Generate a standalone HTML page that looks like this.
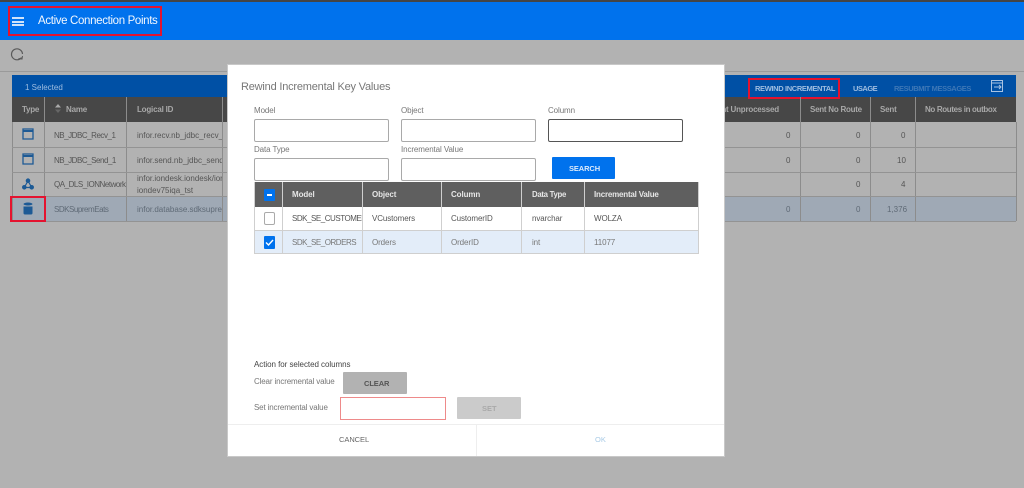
<!DOCTYPE html>
<html><head><meta charset="utf-8"><style>
*{box-sizing:border-box}
html,body{margin:0;padding:0}
body{width:1024px;height:488px;overflow:hidden;background:#b2b2b2;position:relative;font-family:"Liberation Sans",sans-serif;font-size:8px;color:#555}
.a{position:absolute}
.t{position:absolute;white-space:nowrap;line-height:12px}
.b{font-weight:bold}
.r{position:absolute;border:2px solid #e4132f}
.v{position:absolute;width:1px;background:#8c8c8c}
.h{position:absolute;height:1px;background:#939393;left:12px;width:1004px}
.inp{position:absolute;height:23px;background:#fff;border:1px solid #a9a9a9;border-radius:2px}
.dv{position:absolute;width:1px;background:#cfcfcf}
.dh{position:absolute;height:1px;background:#cfcfcf;left:254px;width:445px}
.n{font-size:8px;letter-spacing:-.47px}
.l{color:#777;letter-spacing:-.1px}
</style></head><body>
<div class="a" style="left:0;top:0;width:1024px;height:2px;background:#444"></div>
<div class="a" style="left:0;top:2px;width:1024px;height:38px;background:#0072ed"></div>
<div class="a" style="left:12px;top:17px;width:12px;height:2px;background:#cfe3fa"></div>
<div class="a" style="left:12px;top:20.5px;width:12px;height:2px;background:#cfe3fa"></div>
<div class="a" style="left:12px;top:24px;width:12px;height:2px;background:#cfe3fa"></div>
<div class="t" style="left:38px;top:14px;font-size:11.5px;color:#f2f7fe;line-height:14px;letter-spacing:-.35px">Active Connection Points</div>
<div class="r" style="left:8px;top:6px;width:154px;height:30px"></div>
<svg class="a" style="left:10px;top:47px" width="14" height="14" viewBox="0 0 14 14" fill="none" stroke="#5a5a5a" stroke-width="1.2"><path d="M11.500 10.500A5.500 5.500 0 1 1 12.500 7"/><path d="M8.500 11.500l3.500.5.500-3" stroke-width="1"/></svg>
<div class="a" style="left:0;top:71px;width:1024px;height:1px;background:#9a9a9a"></div>

<div class="a" style="left:12px;top:75px;width:1004px;height:22px;background:#0050a5"></div>
<div class="a" style="left:12px;top:97px;width:1004px;height:25px;background:#474747"></div>
<div class="a" style="left:12px;top:196px;width:1004px;height:25px;background:#9fa9b5"></div>
<div class="t" style="left:25px;top:82px;color:#9ebde0">1 Selected</div>
<div class="t b" style="left:755px;top:83px;color:#9ebde0;font-size:7.5px;letter-spacing:-.36px">REWIND INCREMENTAL</div>
<div class="t b" style="left:853px;top:83px;color:#9ebde0;font-size:7.5px;letter-spacing:-.5px">USAGE</div>
<div class="t b" style="left:894px;top:83px;color:#3d77b6;font-size:7.5px;letter-spacing:-.4px">RESUBMIT MESSAGES</div>
<svg class="a" style="left:990px;top:79px" width="14" height="14" viewBox="0 0 14 14" fill="none" stroke="#a9c3e2"><path d="M1.500 1.500h11v11h-11zM1.500 4h11M4 8h7M9 6l2 2-2 2"/></svg>
<div class="r" style="left:748px;top:78px;width:92px;height:21px"></div>

<div class="t b" style="left:22px;top:104px;color:#a8a8a8;letter-spacing:-.25px">Type</div>
<svg class="a" style="left:54px;top:103px" width="8" height="11"><path d="M4 1l3 3.500H1z" fill="#aaa"/><path d="M4 10l3-3.500H1z" fill="#666"/></svg>
<div class="t b" style="left:66px;top:104px;color:#a8a8a8;letter-spacing:-.2px">Name</div>
<div class="t b" style="left:137px;top:104px;color:#a8a8a8;letter-spacing:-.2px">Logical ID</div>
<div class="t b" style="left:700px;top:104px;color:#a8a8a8;letter-spacing:-.2px;width:79px;overflow:hidden;direction:rtl">Sent Unprocessed</div>
<div class="t b" style="left:810px;top:104px;color:#a8a8a8;letter-spacing:-.25px">Sent No Route</div>
<div class="t b" style="left:880px;top:104px;color:#a8a8a8;letter-spacing:-.2px">Sent</div>
<div class="t b" style="left:925px;top:104px;color:#a8a8a8;letter-spacing:-.35px">No Routes in outbox</div>

<div class="v" style="left:44px;top:97px;height:124px"></div>
<div class="v" style="left:126px;top:97px;height:124px"></div>
<div class="v" style="left:222px;top:97px;height:124px"></div>
<div class="v" style="left:800px;top:97px;height:124px"></div>
<div class="v" style="left:870px;top:97px;height:124px"></div>
<div class="v" style="left:915px;top:97px;height:124px"></div>
<div class="v" style="left:12px;top:122px;height:99px"></div>
<div class="v" style="left:1016px;top:122px;height:99px"></div>
<div class="h" style="top:147px"></div>
<div class="h" style="top:172px"></div>
<div class="h" style="top:196px"></div>
<div class="h" style="top:221px"></div>

<svg class="a" style="left:22px;top:128px" width="12" height="12" viewBox="0 0 12 12" fill="none" stroke="#1d5a95" stroke-width="1.300"><path d="M1 1h10v10H1z"/><path d="M1 3h10" stroke-width="2"/></svg>
<svg class="a" style="left:22px;top:153px" width="12" height="12" viewBox="0 0 12 12" fill="none" stroke="#1d5a95" stroke-width="1.300"><path d="M1 1h10v10H1z"/><path d="M1 3h10" stroke-width="2"/></svg>
<svg class="a" style="left:22px;top:178px" width="12" height="12" viewBox="0 0 12 12" fill="#1d5a95" stroke="#1d5a95"><path d="M6 3 2.500 9M6 3l3.500 6M2.500 9.500h7" fill="none" stroke-width="1.200"/><circle cx="6" cy="2.700" r="1.800"/><circle cx="2.300" cy="9.300" r="1.800"/><circle cx="9.700" cy="9.300" r="1.800"/></svg>
<svg class="a" style="left:23px;top:202px" width="10" height="13" viewBox="0 0 10 13"><path d="M.5 4.500h9V11q0 1.500-1.500 1.500H2Q.5 12.500.5 11z" fill="#1d5a95"/><ellipse cx="5" cy="2" rx="4.500" ry="1.500" fill="#1d5a95"/></svg>
<div class="r" style="left:10px;top:196px;width:36px;height:26px"></div>

<div class="t n" style="left:54px;top:130px">NB_JDBC_Recv_1</div>
<div class="t n" style="left:54px;top:155px">NB_JDBC_Send_1</div>
<div class="t n" style="left:54px;top:179px;width:72px;overflow:hidden">QA_DLS_IONNetwork</div>
<div class="t n" style="left:54px;top:204px;color:#5f6a76">SDKSupremEats</div>
<div class="t" style="left:137px;top:130px;width:85px;overflow:hidden">infor.recv.nb_jdbc_recv_1</div>
<div class="t" style="left:137px;top:155px;width:85px;overflow:hidden">infor.send.nb_jdbc_send_1</div>
<div class="t" style="left:137px;top:173px;width:85px;overflow:hidden">infor.iondesk.iondesk/ion</div>
<div class="t" style="left:137px;top:185px;width:85px;overflow:hidden">iondev75iqa_tst</div>
<div class="t" style="left:137px;top:204px;width:85px;overflow:hidden;color:#5f6a76">infor.database.sdksuprem</div>

<div class="t" style="left:786px;top:130px">0</div><div class="t" style="left:856px;top:130px">0</div><div class="t" style="left:901px;top:130px">0</div>
<div class="t" style="left:786px;top:155px">0</div><div class="t" style="left:856px;top:155px">0</div><div class="t" style="left:897px;top:155px">10</div>
<div class="t" style="left:856px;top:179px">0</div><div class="t" style="left:901px;top:179px">4</div>
<div class="t" style="left:786px;top:204px;color:#5f6a76">0</div><div class="t" style="left:856px;top:204px;color:#5f6a76">0</div><div class="t" style="left:887px;top:204px;color:#5f6a76">1,376</div>

<!-- dialog -->
<div class="a" style="left:227px;top:64px;width:498px;height:393px;background:#fff;border:1px solid #c8c8c8"></div>
<div class="t" style="left:241px;top:80px;font-size:11px;line-height:14px;color:#777;letter-spacing:-.2px">Rewind Incremental Key Values</div>
<div class="t l" style="left:254px;top:105px">Model</div>
<div class="t l" style="left:401px;top:105px">Object</div>
<div class="t l" style="left:548px;top:105px">Column</div>
<div class="inp" style="left:254px;top:119px;width:135px"></div>
<div class="inp" style="left:401px;top:119px;width:135px"></div>
<div class="inp" style="left:548px;top:119px;width:135px;border-color:#555"></div>
<div class="t l" style="left:254px;top:144px">Data Type</div>
<div class="t l" style="left:401px;top:144px">Incremental Value</div>
<div class="inp" style="left:254px;top:158px;width:135px"></div>
<div class="inp" style="left:401px;top:158px;width:135px"></div>
<div class="a" style="left:552px;top:157px;width:63px;height:22px;background:#0072ed;border-radius:1px"></div>
<div class="t b" style="left:569px;top:163px;color:#dcebfc;font-size:7.5px;letter-spacing:-.1px">SEARCH</div>

<div class="a" style="left:254px;top:182px;width:445px;height:25px;background:#5f5f5f"></div>
<div class="a" style="left:254px;top:231px;width:445px;height:23px;background:#e3edf9"></div>
<div class="dh" style="top:230px"></div>
<div class="dh" style="top:253px"></div>
<div class="dv" style="left:254px;top:182px;height:72px"></div>
<div class="dv" style="left:282px;top:182px;height:72px"></div>
<div class="dv" style="left:362px;top:182px;height:72px"></div>
<div class="dv" style="left:441px;top:182px;height:72px"></div>
<div class="dv" style="left:521px;top:182px;height:72px"></div>
<div class="dv" style="left:584px;top:182px;height:72px"></div>
<div class="dv" style="left:698px;top:182px;height:72px"></div>

<div class="a" style="left:264px;top:189px;width:11px;height:12px;background:#0072ed;border-radius:1px"></div>
<div class="a" style="left:267px;top:194px;width:5px;height:1.500px;background:#fff"></div>
<div class="a" style="left:264px;top:212px;width:11px;height:13px;background:#fff;border:1px solid #aaa;border-radius:2px"></div>
<div class="a" style="left:264px;top:236px;width:11px;height:13px;background:#0072ed;border-radius:1px"></div>
<svg class="a" style="left:264px;top:236px" width="11" height="13" fill="none" stroke="#fff" stroke-width="1.400"><path d="M2 6.500l2.500 2.500L9 4"/></svg>

<div class="t b" style="left:292px;top:189px;color:#e6e6e6;letter-spacing:-.1px">Model</div>
<div class="t b" style="left:372px;top:189px;color:#e6e6e6;letter-spacing:-.1px">Object</div>
<div class="t b" style="left:451px;top:189px;color:#e6e6e6;letter-spacing:-.1px">Column</div>
<div class="t b" style="left:532px;top:189px;color:#e6e6e6;letter-spacing:-.3px;font-size:7.800px">Data Type</div>
<div class="t b" style="left:594px;top:189px;color:#e6e6e6;letter-spacing:-.2px">Incremental Value</div>

<div class="t n" style="left:292px;top:213px;width:70px;overflow:hidden">SDK_SE_CUSTOMER</div>
<div class="t l" style="left:372px;top:213px;color:#555">VCustomers</div>
<div class="t l" style="left:451px;top:213px;color:#555">CustomerID</div>
<div class="t l" style="left:532px;top:213px;color:#555">nvarchar</div>
<div class="t l" style="left:594px;top:213px;color:#555">WOLZA</div>
<div class="t n" style="left:292px;top:237px;color:#777">SDK_SE_ORDERS</div>
<div class="t l" style="left:372px;top:237px">Orders</div>
<div class="t l" style="left:451px;top:237px">OrderID</div>
<div class="t l" style="left:532px;top:237px">int</div>
<div class="t l" style="left:594px;top:237px">11077</div>

<div class="t" style="left:254px;top:359px;color:#444;letter-spacing:-.05px">Action for selected columns</div>
<div class="t l" style="left:254px;top:376px;letter-spacing:-.15px">Clear incremental value</div>
<div class="a" style="left:343px;top:372px;width:64px;height:22px;background:#b2b2b2;border-radius:1px"></div>
<div class="t b" style="left:364px;top:378px;color:#555;font-size:7.5px;letter-spacing:-.1px">CLEAR</div>
<div class="t l" style="left:254px;top:402px;letter-spacing:-.15px">Set incremental value</div>
<div class="a" style="left:340px;top:397px;width:106px;height:23px;background:#fff;border:1px solid #ee8a8a"></div>
<div class="a" style="left:457px;top:397px;width:64px;height:22px;background:#cbcbcb;border-radius:1px"></div>
<div class="t b" style="left:482px;top:403px;color:#a9a9a9;font-size:7.5px">SET</div>

<div class="a" style="left:228px;top:424px;width:496px;height:1px;background:#eeeeee"></div>
<div class="a" style="left:476px;top:424px;width:1px;height:32px;background:#eeeeee"></div>
<div class="t" style="left:339px;top:434px;font-size:7.500px;color:#666;letter-spacing:-.05px">CANCEL</div>
<div class="t" style="left:595px;top:434px;font-size:7.500px;color:#a9cbe6">OK</div>
</body></html>
